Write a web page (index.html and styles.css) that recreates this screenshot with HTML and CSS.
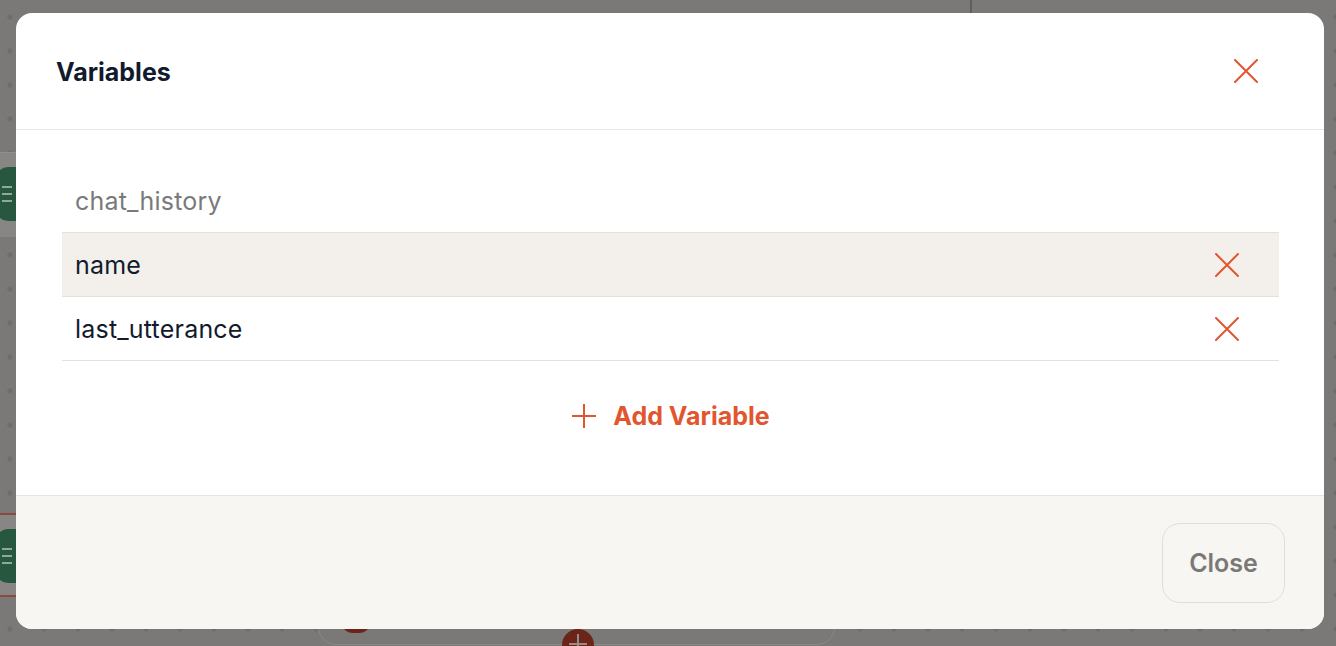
FILE: index.html
```html
<!DOCTYPE html>
<html>
<head>
<meta charset="utf-8">
<link rel="stylesheet" href="styles.css">
</head>
<body>
<div class="canvas">
  <div class="vline"></div>
  <div class="node node-top"><div class="node-icon"><span></span><span></span><span></span></div></div>
  <div class="node node-bottom"><div class="node-icon"><span></span><span></span><span></span></div></div>
  <div class="card-bottom"><div class="red-blob"></div></div>
  <div class="add-dot"></div>
</div>
<div class="overlay">
  <div class="modal">
    <div class="modal-header">
      <h2 class="modal-title">Variables</h2>
      <button class="icon-btn" aria-label="Close">
        <svg width="24" height="24" viewBox="0 0 24 24"><path d="M1 1L23 23M23 1L1 23" stroke="#e2562f" stroke-width="2" fill="none" stroke-linecap="round"/></svg>
      </button>
    </div>
    <div class="modal-body">
      <div class="var-row var-row-fixed"><span class="var-name muted">chat_history</span></div>
      <div class="var-row var-row-hover"><span class="var-name">name</span>
        <svg class="del" width="24" height="24" viewBox="0 0 24 24"><path d="M1 1L23 23M23 1L1 23" stroke="#e2562f" stroke-width="2" fill="none" stroke-linecap="round"/></svg>
      </div>
      <div class="var-row"><span class="var-name">last_utterance</span>
        <svg class="del" width="24" height="24" viewBox="0 0 24 24"><path d="M1 1L23 23M23 1L1 23" stroke="#e2562f" stroke-width="2" fill="none" stroke-linecap="round"/></svg>
      </div>
      <button class="add-btn">
        <svg width="26" height="26" viewBox="0 0 26 26"><path d="M13 1V25M1 13H25" stroke="#e2562f" stroke-width="2" fill="none"/></svg>
        <span>Add Variable</span>
      </button>
    </div>
    <div class="modal-footer">
      <button class="close-btn">Close</button>
    </div>
  </div>
</div>
</body>
</html>
```
FILE: styles.css
```css
* { box-sizing: border-box; }
html, body {
  margin: 0;
  width: 1336px;
  height: 646px;
  overflow: hidden;
  font-family: Inter, "Liberation Sans", sans-serif;
}
body {
  position: relative;
  background-color: #7a7977;
  background-image: radial-gradient(circle, #6f6e6c 2.4px, transparent 2.8px);
  background-size: 34px 34px;
  background-position: -7px 0px;
}
.canvas { position: absolute; inset: 0; }
.vline {
  position: absolute; left: 970px; top: 0; width: 2px; height: 20px;
  background: #5f5e5c;
}
.node {
  position: absolute; left: -200px; width: 240px;
  background: #878685;
  border-radius: 10px;
}
.node-top { top: 152px; height: 85px; border-top: 1px solid #8f8e8c; }
.node-bottom { top: 513px; height: 84px; border-top: 2px solid #8c4a3c; border-bottom: 2px solid #8c4a3c; }
.node-icon {
  position: absolute; left: 196px; top: 14px; width: 40px; height: 54px;
  background: #27573f; border-radius: 12px;
  display: flex; flex-direction: column; justify-content: center; gap: 5px;
  padding-left: 6px;
}
.node-icon span { display: block; width: 10px; height: 2px; background: #8fa89a; }
.card-bottom {
  position: absolute; left: 318px; top: 600px; width: 517px; height: 45px;
  border: 1px solid #8a8987; border-radius: 18px;
  background: #7a7977;
}
.red-blob {
  position: absolute; left: 22px; top: 20px; width: 30px; height: 12px;
  background: #6b2419; border-radius: 0 0 14px 14px;
}
.add-dot {
  position: absolute; left: 562px; top: 629px; width: 32px; height: 32px;
  border-radius: 50%; background: #6b2419;
}
.add-dot::before, .add-dot::after {
  content: ""; position: absolute; background: #9a8a86;
}
.add-dot::before { left: 15px; top: 5px; width: 2px; height: 20px; }
.add-dot::after { left: 7px; top: 14px; width: 18px; height: 2px; }
.overlay {
  position: absolute; inset: 0;
  padding: 13px 12px 17px 16px;
  display: flex;
}
.modal {
  flex: 1;
  background: #fff;
  border-radius: 16px;
  overflow: hidden;
  display: flex;
  flex-direction: column;
}
.modal-header {
  height: 117px;
  border-bottom: 1px solid #e6e6e6;
  display: flex; align-items: center; justify-content: space-between;
  padding: 0 66px 0 40px;
}
.modal-title {
  margin: 0; font-size: 25px; font-weight: 700; color: #121a2e;
  padding-top: 1px;
}
.icon-btn {
  background: none; border: 0; padding: 0; width: 24px; height: 24px;
  display: flex; cursor: pointer;
}
.modal-body {
  flex: 1;
  padding: 39px 45px 0 46px;
  display: flex; flex-direction: column;
}
.var-row {
  height: 64px;
  border-bottom: 1px solid #e8e1d8;
  display: flex; align-items: center; justify-content: space-between;
  padding: 0 40px 0 13px;
}
.var-row-hover { background: #f3f0eb; }
.var-name { font-size: 25px; letter-spacing: 0.2px; color: #121a2e; }
.var-name.muted { color: #7a7a7a; }
.add-btn {
  align-self: center;
  margin-top: 40px;
  background: none; border: 0; padding: 0;
  display: flex; align-items: center; gap: 16px;
  font-family: inherit; font-size: 25px; font-weight: 700; color: #e2562f;
  cursor: pointer;
}
.modal-footer {
  height: 134px;
  background: #f8f6f2;
  border-top: 1px solid #e8e4de;
  display: flex; align-items: center; justify-content: flex-end;
  padding: 0 39px 0 0;
}
.close-btn {
  width: 123px; height: 80px;
  border: 1px solid #e2ddd6; border-radius: 18px;
  background: #f8f6f2;
  font-family: inherit; font-size: 25px; font-weight: 600; color: #7a7977;
}
```
